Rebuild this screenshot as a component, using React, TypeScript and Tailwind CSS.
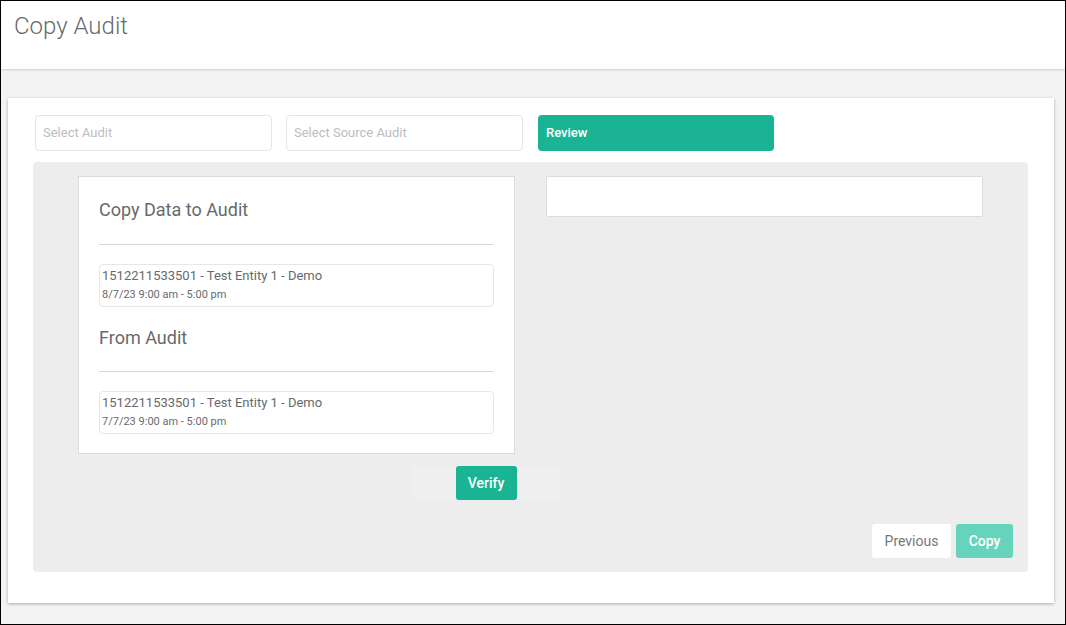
import React from 'react';

const entries = [
  { heading: 'Copy Data to Audit', title: '1512211533501 - Test Entity 1 - Demo', time: '8/7/23 9:00 am - 5:00 pm' },
  { heading: 'From Audit', title: '1512211533501 - Test Entity 1 - Demo', time: '7/7/23 9:00 am - 5:00 pm' },
];

export default function App() {
  return (
    <div
      className="w-[1066px] h-[625px] border border-black bg-[#f3f3f4] overflow-hidden text-[#676a6c]"
      style={{ fontFamily: 'Roboto, "Open Sans", sans-serif' }}
    >
      <header className="h-[68px] bg-white shadow-[0_1px_2px_rgba(0,0,0,0.15)] pl-[13px] pt-[13px]">
        <h1 className="text-[24px] leading-[24px] font-light text-[#676a6c]">Copy Audit</h1>
      </header>

      <div className="ml-[7px] mr-[11px] mt-[29px] h-[505px] bg-white shadow-[0_1px_3px_rgba(0,0,0,0.3)] pt-[17px] pl-[25px] pr-[26px]">
        <div className="flex gap-[14px] pl-[2px]">
          <div className="w-[237px] h-[36px] border border-[#e5e6e7] rounded-[4px] flex items-center pl-[7px] text-[13px] text-[#bdbdbd]">
            Select Audit
          </div>
          <div className="w-[237px] h-[36px] border border-[#e5e6e7] rounded-[4px] flex items-center pl-[7px] text-[13px] text-[#bdbdbd]">
            Select Source Audit
          </div>
          <div className="w-[236px] h-[36px] ml-[1px] bg-[#1ab394] rounded-[4px] flex items-center pl-[8px] text-[13px] font-medium text-white">
            Review
          </div>
        </div>

        <div className="mt-[11px] h-[410px] bg-[#ededed] rounded-[4px] pt-[14px] px-[15px]">
          <div className="flex pl-[30px] gap-[31px]">
            <div className="w-[437px] h-[278px] bg-white border border-[#dcdcdc] pl-[20px] pr-[20px] pt-[22px]">
              {entries.map((e, i) => (
                <div key={i} className={i > 0 ? 'mt-[20px]' : ''}>
                  <h2 className="text-[18px] leading-[22px] text-[#676a6c]">{e.heading}</h2>
                  <div className={`${i > 0 ? 'mt-[22px]' : 'mt-[23px]'} border-t border-[#d9d9d9]`} />
                  <div className="mt-[19px] h-[43px] border border-[#e7e7e7] rounded-[4px] pl-[2px] pt-[3px]">
                    <div className="text-[13px] leading-[16px]">{e.title}</div>
                    <div className="mt-[4px] text-[11px] leading-[14px]">{e.time}</div>
                  </div>
                </div>
              ))}
            </div>
            <div className="w-[437px] h-[41px] bg-white border border-[#dcdcdc] rounded-[2px]" />
          </div>

          <div className="mt-[12px] ml-[363px] w-[150px] h-[33px] flex justify-center items-start bg-[#efefef]">
            <button className="w-[61px] h-[34px] bg-[#1ab394] rounded-[3px] text-white text-[14px] font-medium">
              Verify
            </button>
          </div>

          <div className="mt-[25px] flex justify-end gap-[5px]">
            <button className="w-[79px] h-[34px] bg-white rounded-[3px] text-[14px] text-[#777]">Previous</button>
            <button className="w-[57px] h-[34px] bg-[#66d4bd] rounded-[3px] text-[14px] font-medium text-white">Copy</button>
          </div>
        </div>
      </div>
    </div>
  );
}
